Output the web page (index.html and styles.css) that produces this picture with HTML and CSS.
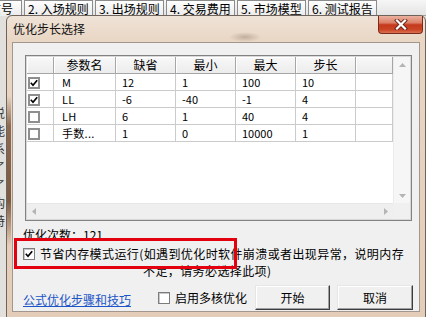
FILE: index.html
```html
<!DOCTYPE html>
<html lang="zh-CN">
<head>
<meta charset="utf-8">
<title>优化步长选择</title>
<link rel="stylesheet" href="styles.css">
</head>
<body>
<div class="screen">
  <div class="tabs">
    <div class="tab tab-first">信号</div>
    <div class="tab">2. 入场规则</div>
    <div class="tab">3. 出场规则</div>
    <div class="tab">4. 交易费用</div>
    <div class="tab">5. 市场模型</div>
    <div class="tab">6. 测试报告</div>
  </div>
  <div class="desk">
    <div class="bgcol">
      <span>说</span><span>能</span><span>系</span><span>了</span><span>了</span><span>构</span><span>特</span>
    </div>
  </div>

  <div class="dialog">
    <div class="titlebar">
      <span class="title">优化步长选择</span>
      <div class="close">
        <svg width="14" height="11" viewBox="0 0 14 11">
          <path d="M3 1.5 L11 9.5 M11 1.5 L3 9.5" stroke="#6a2414" stroke-width="4" stroke-linecap="square" fill="none"/>
          <path d="M3 1.5 L11 9.5 M11 1.5 L3 9.5" stroke="#ffffff" stroke-width="2.2" stroke-linecap="square" fill="none"/>
        </svg>
      </div>
    </div>
    <div class="client">
      <div class="lv">
        <div class="lv-inner">
          <div class="lv-body">
            <div class="lv-row lv-head">
              <div class="hc"></div>
              <div class="hc">参数名</div>
              <div class="hc">缺省</div>
              <div class="hc">最小</div>
              <div class="hc">最大</div>
              <div class="hc">步长</div>
              <div class="hc"></div>
            </div>
            <div class="lv-row">
              <div class="c c-chk"><span class="gchk"><svg width="8" height="8" viewBox="0 0 8 8"><path d="M0.8 3.8 L3 6.2 L7.2 1.2" stroke="#000" stroke-width="1.7" fill="none"/></svg></span></div>
              <div class="c c-name">M</div>
              <div class="c">12</div>
              <div class="c">1</div>
              <div class="c">100</div>
              <div class="c">10</div>
              <div class="c"></div>
            </div>
            <div class="lv-row">
              <div class="c c-chk"><span class="gchk"><svg width="8" height="8" viewBox="0 0 8 8"><path d="M0.8 3.8 L3 6.2 L7.2 1.2" stroke="#000" stroke-width="1.7" fill="none"/></svg></span></div>
              <div class="c c-name">LL</div>
              <div class="c">-6</div>
              <div class="c">-40</div>
              <div class="c">-1</div>
              <div class="c">4</div>
              <div class="c"></div>
            </div>
            <div class="lv-row">
              <div class="c c-chk"><span class="gchk"></span></div>
              <div class="c c-name">LH</div>
              <div class="c">6</div>
              <div class="c">1</div>
              <div class="c">40</div>
              <div class="c">4</div>
              <div class="c"></div>
            </div>
            <div class="lv-row">
              <div class="c c-chk"><span class="gchk"></span></div>
              <div class="c c-name">手数...</div>
              <div class="c">1</div>
              <div class="c">0</div>
              <div class="c">10000</div>
              <div class="c">1</div>
              <div class="c"></div>
            </div>
          </div>
          <div class="vscroll">
            <svg class="arr" width="7" height="4" viewBox="0 0 7 4"><path d="M0 4 L3.5 0 L7 4 Z" fill="#b4b4b4"/></svg>
            <svg class="arr" width="7" height="4" viewBox="0 0 7 4"><path d="M0 0 L3.5 4 L7 0 Z" fill="#b4b4b4"/></svg>
          </div>
          <div class="hscroll">
            <svg class="arr" width="4" height="7" viewBox="0 0 4 7"><path d="M4 0 L0 3.5 L4 7 Z" fill="#b4b4b4"/></svg>
            <svg class="arr" width="4" height="7" viewBox="0 0 4 7"><path d="M0 0 L4 3.5 L0 7 Z" fill="#b4b4b4"/></svg>
          </div>
          <div class="corner"></div>
        </div>
      </div>

      <div class="count">优化次数：121</div>

      <div class="memrow">
        <span class="chk"><svg width="8" height="8" viewBox="0 0 8 8"><path d="M0.8 3.8 L3 6.2 L7.2 1.2" stroke="#000" stroke-width="1.7" fill="none"/></svg></span>
        <div class="memlabel">
          <span class="line">节省内存模式运行(如遇到优化时软件崩溃或者出现异常，说明内存</span>
          <span class="line line2">不足，请务必选择此项)</span>
        </div>
      </div>

      <div class="bottom">
        <a class="link" href="#">公式优化步骤和技巧</a>
        <span class="chk chk-mc"></span>
        <span class="mclabel">启用多核优化</span>
        <div class="btn btn-start">开始</div>
        <div class="btn btn-cancel">取消</div>
      </div>
    </div>
  </div>

  <div class="redbox"></div>
</div>
</body>
</html>
```

FILE: styles.css
```css
* { box-sizing: border-box; }
html, body { margin: 0; padding: 0; }
body {
  width: 426px;
  height: 317px;
  overflow: hidden;
  font-family: "Noto Sans CJK SC", "Noto Sans", sans-serif;
  font-size: 12px;
  color: #000;
}
.screen {
  position: relative;
  width: 426px;
  height: 317px;
  overflow: hidden;
  background: #e2e0dc;
  display: flex;
  flex-direction: column;
}

/* background tab strip */
.tabs {
  display: flex;
  height: 16px;
  flex: none;
  background: linear-gradient(#f6f6f6, #e4e4e4);
  border-bottom: 1px solid #a0a0a0;
}
.tab {
  width: 69px;
  height: 16px;
  margin-right: 2px;
  padding: 1px 0 0 3px;
  border: 1px solid #8c8c8c;
  border-bottom: none;
  background: linear-gradient(#fefefe, #ebebeb);
  line-height: 14px;
  white-space: nowrap;
  flex: none;
}
.tab-first {
  width: 50px;
  margin-left: -28px;
  padding: 1px 8px 0 0;
  text-align: right;
}

.desk { flex: 1; display: flex; }
.bgcol {
  display: flex;
  flex-direction: column;
  margin-left: -7px;
  padding-top: 88px;
  line-height: 18px;
  color: #333;
}

/* dialog window */
.dialog {
  position: absolute;
  left: 6px;
  top: 15px;
  width: 420px;
  height: 304px;
  border: 1px solid #6e645c;
  border-radius: 6px 6px 0 0;
  background:
    radial-gradient(ellipse 16px 5px at 238px 21px, rgba(120, 95, 75, 0.35), rgba(120, 95, 75, 0)),
    linear-gradient(#efe3d7 0, #e9d6c4 26px, #e4cdb8 100%);
}
.dialog::before {
  content: "";
  position: absolute;
  left: 0;
  top: 80px;
  width: 4px;
  height: 150px;
  background: linear-gradient(rgba(140, 105, 80, 0), #8c6a50 20%, #7a5a42 70%, rgba(140, 105, 80, 0));
}
.titlebar {
  height: 26px;
  display: flex;
  justify-content: space-between;
  align-items: flex-start;
}
.title {
  padding: 6px 0 0 6px;
  line-height: 14px;
  color: #111;
}
.close {
  width: 45px;
  height: 18px;
  margin-right: 2px;
  border: 1px solid #7a2c1c;
  border-top: none;
  border-radius: 0 0 4px 4px;
  background: linear-gradient(#eab1a0 0%, #dc8068 40%, #c5391d 52%, #c94526 80%, #dc7052 100%);
  display: flex;
  align-items: center;
  justify-content: center;
}

.client {
  margin: 0 5px;
  height: 270px;
  border: 1px solid #a2978d;
  background: #f0f0f0;
  padding: 12px 6px 0 12px;
  display: flex;
  flex-direction: column;
}

/* list view */
.lv {
  width: 387px;
  height: 166px;
  border: 1px solid #828282;
  padding: 1px;
  background: #d8d8d8;
  flex: none;
}
.lv-inner {
  display: grid;
  grid-template-columns: 366px 17px;
  grid-template-rows: 146px 16px;
  height: 100%;
}
.lv-body { background: #fff; }
.lv-row {
  display: grid;
  grid-template-columns: 27px 62px 60px 60px 60px 60px 37px;
  height: 17px;
}
.hc {
  background: linear-gradient(#f8f8f8, #ececec);
  border-right: 1px solid #a6a6a6;
  border-bottom: 1px solid #a6a6a6;
  box-shadow: inset 1px 1px 0 #ffffff;
  text-align: center;
  line-height: 16px;
}
.c {
  border-right: 1px solid #cbcbcb;
  border-bottom: 1px solid #cbcbcb;
  padding-left: 6px;
  line-height: 16px;
  font-size: 11px;
  white-space: nowrap;
  overflow: hidden;
}
.c-name { padding-left: 8px; letter-spacing: 0.3px; }
.c-chk { padding: 3px 0 0 1px; }
.gchk {
  display: flex;
  align-items: center;
  justify-content: center;
  width: 12px;
  height: 12px;
  border: 2px solid #8e8e8e;
  background: #fff;
}

.vscroll {
  background: #f6f6f6;
  border-left: 1px solid #ececec;
  display: flex;
  flex-direction: column;
  align-items: center;
  justify-content: space-between;
  padding: 6px 0 5px;
}
.hscroll {
  background: #efefef;
  border-top: 1px solid #e6e6e6;
  display: flex;
  align-items: center;
  justify-content: space-between;
  padding: 0 5px 0 5px;
}
.corner { background: #f0f0f0; }

/* texts below the list */
.count {
  margin: 8px 0 0 -2px;
  height: 10px;
  line-height: 12px;
  overflow: hidden;
  flex: none;
}
.memrow {
  display: flex;
  align-items: flex-start;
  margin: 6px 0 0 -2px;
  flex: none;
}
.chk {
  width: 12px;
  height: 12px;
  flex: none;
  border: 1px solid #7d7d7d;
  background: #fff;
  box-shadow: inset 1px 1px 0 #c8c8c8;
  display: flex;
  align-items: center;
  justify-content: center;
}
.memrow .chk { margin-top: 3px; }
.memlabel {
  margin-left: 5px;
  line-height: 17px;
  letter-spacing: 0.4px;
  white-space: nowrap;
}
.line { display: block; }
.line2 { padding-left: 103px; }

.bottom {
  display: flex;
  align-items: center;
  margin: 6px 0 0 -2px;
  height: 25px;
  flex: none;
}
.link {
  color: #1b55c6;
  text-decoration: underline;
  margin-top: 5px;
  line-height: 14px;
  white-space: nowrap;
}
.chk-mc { margin-left: 27px; }
.mclabel { margin-left: 5px; white-space: nowrap; }
.btn {
  height: 25px;
  border: 1px solid;
  border-color: #e6e6e6 #3c3c3c #3c3c3c #e6e6e6;
  box-shadow: inset -1px -1px 0 #a0a0a0, inset 1px 1px 0 #ffffff;
  background: #f0f0f0;
  display: flex;
  align-items: center;
  justify-content: center;
  flex: none;
}
.btn-start { width: 75px; margin-left: 8px; }
.btn-cancel { width: 76px; margin-left: 7px; }

/* annotation */
.redbox {
  position: absolute;
  left: 14px;
  top: 238px;
  width: 223px;
  height: 31px;
  border: 3px solid #e3000f;
}
```
